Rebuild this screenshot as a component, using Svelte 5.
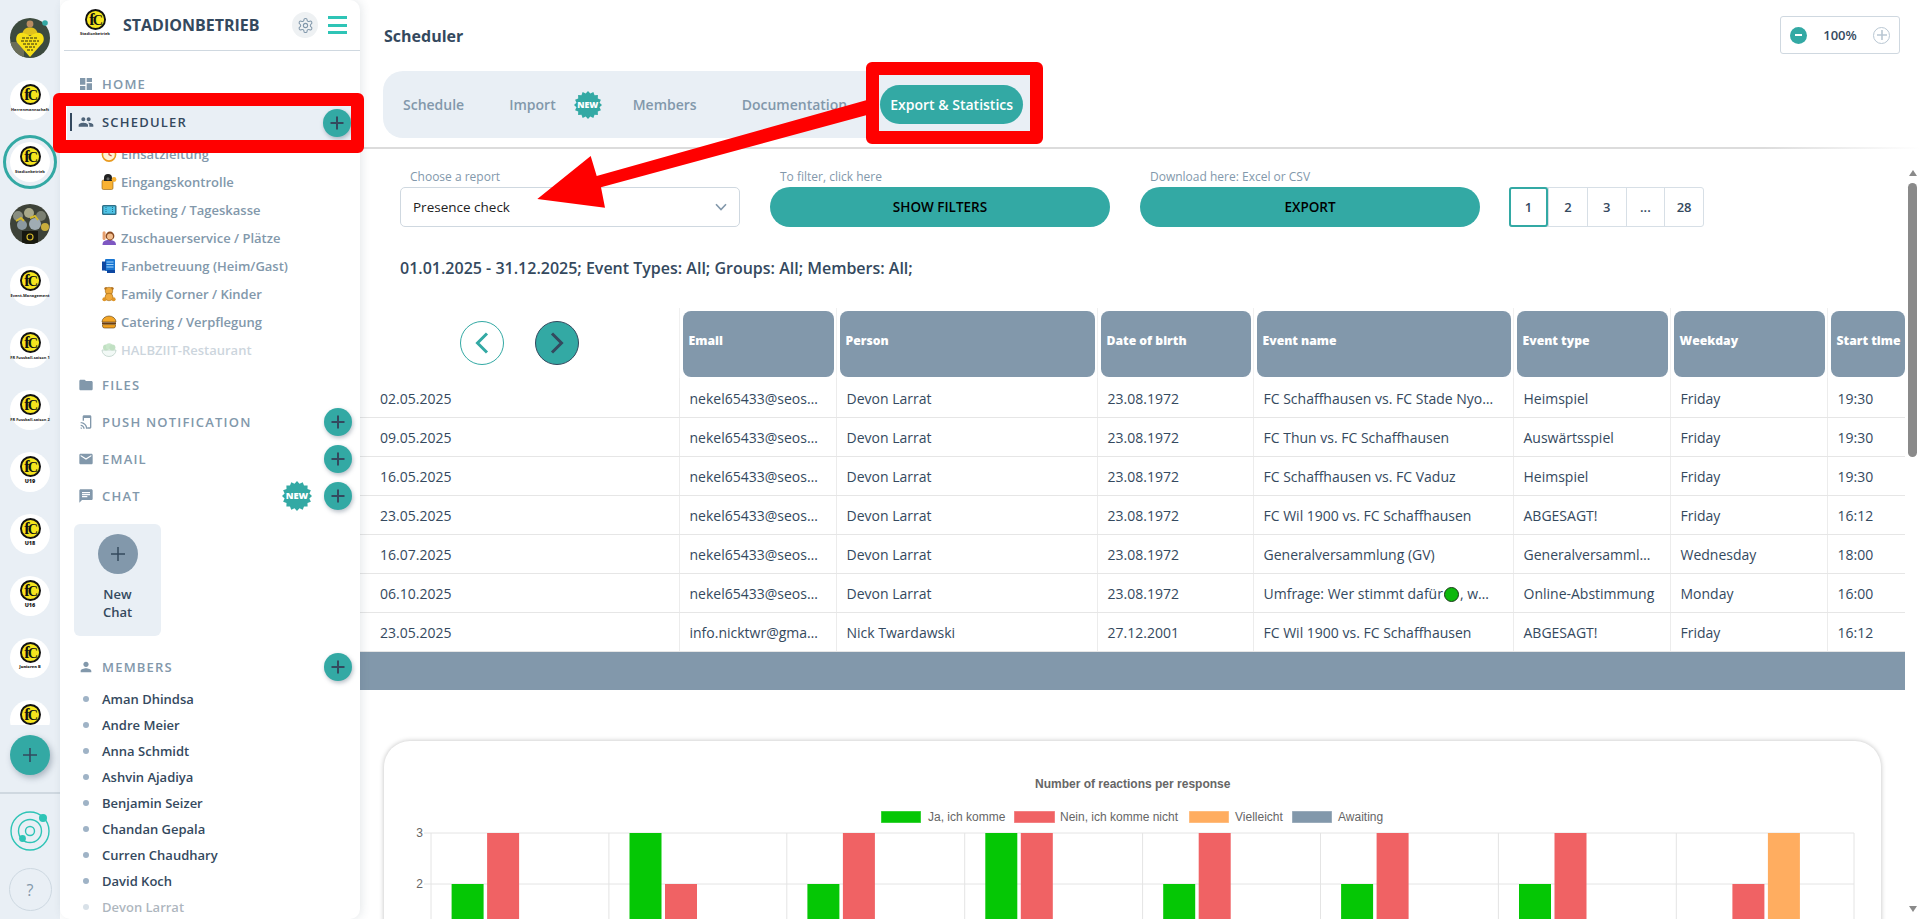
<script>
  const teams = [
    { kind: "photo" },
    { label: "Herrenmannschaft" },
    { label: "Stadionbetrieb", active: true },
    { kind: "group" },
    { label: "Event-Management" },
    { label: "FR Fussball-saison 1" },
    { label: "FR Fussball-saison 2" },
    { label: "U19", big: true },
    { label: "U18", big: true },
    { label: "U16", big: true },
    { label: "Junioren B", big: true, tall: true },
    { label: "" }
  ];

  const scheduleItems = [
    { name: "Einsatzleitung", icon: "clock" },
    { name: "Eingangskontrolle", icon: "gate" },
    { name: "Ticketing / Tageskasse", icon: "ticket" },
    { name: "Zuschauerservice / Plätze", icon: "hand" },
    { name: "Fanbetreuung (Heim/Gast)", icon: "fan" },
    { name: "Family Corner / Kinder", icon: "bear" },
    { name: "Catering / Verpflegung", icon: "burger" },
    { name: "HALBZIIT-Restaurant", icon: "bowl", faded: true }
  ];

  const members = [
    "Aman Dhindsa", "Andre Meier", "Anna Schmidt", "Ashvin Ajadiya", "Benjamin Seizer",
    "Chandan Gepala", "Curren Chaudhary", "David Koch", "Devon Larrat"
  ];

  const icons = {
    home: "M3 13h8V3H3v10zm0 8h8v-6H3v6zm10 0h8V11h-8v10zm0-18v6h8V3h-8z",
    people: "M16 11c1.66 0 2.99-1.34 2.99-3S17.66 5 16 5c-1.66 0-3 1.34-3 3s1.34 3 3 3zm-8 0c1.66 0 2.99-1.34 2.99-3S9.66 5 8 5C6.34 5 5 6.34 5 8s1.34 3 3 3zm0 2c-2.33 0-7 1.17-7 3.5V19h14v-2.5c0-2.33-4.67-3.5-7-3.5zm8 0c-.29 0-.62.02-.97.05 1.16.84 1.97 1.97 1.97 3.45V19h6v-2.5c0-2.33-4.67-3.5-7-3.5z",
    folder: "M10 4H4c-1.1 0-1.99.9-1.99 2L2 18c0 1.1.9 2 2 2h16c1.1 0 2-.9 2-2V8c0-1.1-.9-2-2-2h-8l-2-2z",
    push: "M9 2h9c1.1 0 2 .9 2 2v16c0 1.1-.9 2-2 2h-4v-2h4V6H9v4H7V4c0-1.1.9-2 2-2zM4 12v2c4.4 0 8 3.6 8 8h2c0-5.5-4.5-10-10-10zm0 4v2c2.2 0 4 1.8 4 4h2c0-3.3-2.7-6-6-6zm0 4v2h2c0-1.1-.9-2-2-2z",
    mail: "M20 4H4c-1.1 0-1.99.9-1.99 2L2 18c0 1.1.9 2 2 2h16c1.1 0 2-.9 2-2V6c0-1.1-.9-2-2-2zm0 4l-8 5-8-5V6l8 5 8-5v2z",
    chat: "M20 2H4c-1.1 0-1.99.9-1.99 2L2 22l4-4h14c1.1 0 2-.9 2-2V4c0-1.1-.9-2-2-2zM6 9h12v2H6V9zm8 5H6v-2h8v2zm4-6H6V6h12v2z",
    person: "M12 12c2.21 0 4-1.79 4-4s-1.79-4-4-4-4 1.79-4 4 1.79 4 4 4zm0 2c-2.67 0-8 1.34-8 4v2h16v-2c0-2.66-5.33-4-8-4z"
  };

  const rows = [
    ["02.05.2025", "nekel65433@seos…", "Devon Larrat", "23.08.1972", "FC Schaffhausen vs. FC Stade Nyo…", "Heimspiel", "Friday", "19:30"],
    ["09.05.2025", "nekel65433@seos…", "Devon Larrat", "23.08.1972", "FC Thun vs. FC Schaffhausen", "Auswärtsspiel", "Friday", "19:30"],
    ["16.05.2025", "nekel65433@seos…", "Devon Larrat", "23.08.1972", "FC Schaffhausen vs. FC Vaduz", "Heimspiel", "Friday", "19:30"],
    ["23.05.2025", "nekel65433@seos…", "Devon Larrat", "23.08.1972", "FC Wil 1900 vs. FC Schaffhausen", "ABGESAGT!", "Friday", "16:12"],
    ["16.07.2025", "nekel65433@seos…", "Devon Larrat", "23.08.1972", "Generalversammlung (GV)", "Generalversamml…", "Wednesday", "18:00"],
    ["06.10.2025", "nekel65433@seos…", "Devon Larrat", "23.08.1972", "POLL", "Online-Abstimmung", "Monday", "16:00"],
    ["23.05.2025", "info.nicktwr@gma…", "Nick Twardawski", "27.12.2001", "FC Wil 1900 vs. FC Schaffhausen", "ABGESAGT!", "Friday", "16:12"]
  ];

  const headers = ["Email", "Person", "Date of birth", "Event name", "Event type", "Weekday", "Start time"];

  // chart numbers, coordinates are relative to the card
  const legend = [
    { x: 497, tx: 544, w: 40, color: "#05c705", text: "Ja, ich komme" },
    { x: 630, tx: 676, w: 41, color: "#f06264", text: "Nein, ich komme nicht" },
    { x: 805, tx: 851, w: 40, color: "#ffad60", text: "Vielleicht" },
    { x: 908, tx: 954, w: 40, color: "#8298ab", text: "Awaiting" }
  ];
  const groups = [[2, 3, 0], [3, 2, 0], [2, 3, 0], [3, 3, 0], [2, 3, 0], [2, 3, 0], [2, 3, 0], [0, 2, 3]];
  const barColors = ["#05c705", "#f06264", "#ffad60"];
  const plotLeft = 47;
  const groupW = 177.9;
  const yOf = (v) => 92 + (3 - v) * 51;

  function starPoints(cx, cy, outer, inner, n) {
    const pts = [];
    for (let i = 0; i < n * 2; i++) {
      const r = i % 2 ? inner : outer;
      const a = (Math.PI * i) / n;
      pts.push(`${(cx + r * Math.sin(a)).toFixed(2)},${(cy - r * Math.cos(a)).toFixed(2)}`);
    }
    return pts.join(" ");
  }
  const star = starPoints(15, 15, 15, 12.6, 16);
</script>

{#snippet emblem(size)}
  <svg class="emblem" width={size} height={size} viewBox="0 0 22 22" aria-hidden="true">
    <circle cx="11" cy="11" r="10" fill="#f6e51e" stroke="#111" stroke-width="2" />
    <text x="4.5" y="16.5" class="emblem-f">f</text>
    <text x="8" y="17" class="emblem-c">C</text>
  </svg>
{/snippet}

{#snippet plusBtn(cls = "")}
  <span class="plus {cls}">
    <svg width="16" height="16" viewBox="0 0 16 16" aria-hidden="true"><path d="M8 1.5v13M1.5 8h13" stroke="#34495e" stroke-width="2" fill="none" /></svg>
  </span>
{/snippet}

{#snippet newBadge(size)}
  <span class="badge" style="width:{size}px;height:{size}px">
    <svg width={size} height={size} viewBox="0 0 30 30" aria-hidden="true"><polygon points={star} fill="#33a9a4" /></svg>
    <b style="font-size:{size * 0.31}px">NEW</b>
  </span>
{/snippet}

{#snippet navIcon(d, color = "#8298ab")}
  <svg class="nav-ico" width="16" height="16" viewBox="0 0 24 24" fill={color} aria-hidden="true"><path {d} /></svg>
{/snippet}

{#snippet emoji(name)}
  <svg class="emoji" width="16" height="16" viewBox="0 0 16 16" aria-hidden="true">
    {#if name === "clock"}
      <circle cx="8" cy="8.5" r="6.6" fill="#fff3d6" stroke="#e99a1f" stroke-width="1.6" /><path d="M8 4.6v4l2.6 1.4" stroke="#d2503a" stroke-width="1.2" fill="none" />
    {:else if name === "gate"}
      <rect x="1" y="6" width="11" height="9.5" rx="1.5" fill="#f9b233" stroke="#8a5a10" stroke-width=".6" /><path d="M3 7V4a4 4 0 0 1 8 0v3z" fill="#222" /><circle cx="13" cy="5.5" r="2.4" fill="#f9b233" /><circle cx="7" cy="4.8" r="1.5" fill="#666" />
    {:else if name === "ticket"}
      <rect x="1" y="3" width="14.5" height="10" rx="1.5" fill="#2d6f87" /><rect x="2.4" y="4.4" width="11.7" height="7.2" fill="#4fc3e6" /><path d="M5 5v6M11.5 5v6" stroke="#1f5a70" stroke-width=".8" stroke-dasharray="1 1" />
    {:else if name === "hand"}
      <path d="M1.5 15c0-3.6 2-5 6.5-5s7 1.4 7 5z" fill="#7e57c2" /><rect x="1.6" y="1.2" width="3" height="8.8" rx="1.5" fill="#e7a06e" /><circle cx="9" cy="6" r="4.4" fill="#8a4b22" /><circle cx="9" cy="6.6" r="3" fill="#f2bd8d" />
    {:else if name === "fan"}
      <rect x="4" y="1" width="10" height="12" rx="1" fill="#1976d2" /><path d="M5.5 4h7M5.5 6.5h7M5.5 9h7" stroke="#9fd2fb" stroke-width="1.2" /><rect x="1" y="3.5" width="4" height="9" fill="#0d47a1" /><rect x="6" y="12" width="8" height="3" fill="#0d47a1" />
    {:else if name === "bear"}
      <circle cx="5" cy="2.6" r="1.7" fill="#b8741f" /><circle cx="11" cy="2.6" r="1.7" fill="#b8741f" /><circle cx="8" cy="5" r="3.8" fill="#f0a93b" stroke="#8a5a10" stroke-width=".5" /><ellipse cx="8" cy="11" rx="4" ry="3.8" fill="#f0a93b" stroke="#8a5a10" stroke-width=".5" /><circle cx="3.4" cy="13.2" r="2" fill="#e09526" /><circle cx="12.6" cy="13.2" r="2" fill="#e09526" />
    {:else if name === "burger"}
      <path d="M1 8a7 6 0 0 1 14 0z" fill="#f3a627" stroke="#5c3b0a" stroke-width=".6" /><rect x="1" y="8.4" width="14" height="1.8" fill="#6b3d10" /><path d="M1.5 10.6h13v1.4a2 2 0 0 1-2 2h-9a2 2 0 0 1-2-2z" fill="#f0a020" stroke="#5c3b0a" stroke-width=".6" />
    {:else}
      <path d="M1 8h14a7 6.5 0 0 1-14 0z" fill="#dff1ea" stroke="#5f8f7a" stroke-width=".8" /><circle cx="5" cy="5.6" r="3" fill="#67b36a" /><circle cx="8.2" cy="4.4" r="3.2" fill="#7bc47f" /><circle cx="11.4" cy="5.6" r="3" fill="#67b36a" />
    {/if}
  </svg>
{/snippet}

<div class="page">
  <aside class="rail">
    <div class="team-list">
      {#each teams as t}
        <div class="team" class:active={t.active}>
          {#if t.kind === "photo"}
            <svg width="40" height="40" viewBox="0 0 40 40" aria-hidden="true">
              <defs><clipPath id="c1"><circle cx="20" cy="20" r="20" /></clipPath></defs>
              <g clip-path="url(#c1)">
                <rect width="40" height="40" fill="#3c4a3e" />
                <rect y="24" width="14" height="16" fill="#6a6d58" />
                <circle cx="20" cy="6" r="3.4" fill="#b98c62" />
                <path d="M12 17c1-6 4-7.5 8-7.5s7 1.5 8 7.5z" fill="#e1c21c" />
                <path d="M20 39 7.5 25C4 20 8 13 13.5 15c3 1 5 2 6.5 3 1.5-1 3.5-2 6.5-3C32 13 36 20 32.5 25z" fill="#f6df16" />
                <path d="M12 20h15M11 23h18M13 26h14M15 29h10M17 32h6" stroke="#2a2a10" stroke-width="1.2" stroke-dasharray="3 1" />
              </g>
              <circle cx="35" cy="5" r="2.8" fill="#33a9a4" />
            </svg>
          {:else if t.kind === "group"}
            <svg width="40" height="40" viewBox="0 0 40 40" aria-hidden="true">
              <defs><clipPath id="c2"><circle cx="20" cy="20" r="20" /></clipPath></defs>
              <g clip-path="url(#c2)">
                <rect width="40" height="40" fill="#3d4238" />
                <circle cx="8" cy="12" r="5" fill="#888d80" /><circle cx="19" cy="9" r="5" fill="#a9a98a" /><circle cx="31" cy="12" r="5" fill="#7b8072" />
                <circle cx="12" cy="21" r="5" fill="#8c99a0" /><circle cx="25" cy="20" r="6" fill="#a0acb3" /><circle cx="35" cy="23" r="4" fill="#c8ad3c" />
                <path d="M6 17l5-3 3 3M20 14l5-2 3 4" stroke="#d6ba2c" stroke-width="2" fill="none" />
                <rect x="12" y="27" width="16" height="13" fill="#17180f" /><circle cx="20" cy="33" r="3" fill="none" stroke="#d6ba2c" stroke-width="1.2" />
              </g>
            </svg>
          {:else}
            <span class="team-logo" class:tall={t.tall}>
              {@render emblem(21)}
              <span class="team-label" class:big={t.big}>{t.label}</span>
            </span>
          {/if}
        </div>
      {/each}
    </div>
    <span class="rail-add">
      <svg width="16" height="16" viewBox="0 0 16 16" aria-hidden="true"><path d="M8 1v14M1 8h14" stroke="#34495e" stroke-width="1.6" fill="none" /></svg>
    </span>
    <div class="rail-line"></div>
    <svg class="orbit" width="40" height="40" viewBox="0 0 40 40" aria-hidden="true">
      <circle cx="20" cy="20" r="19" fill="none" stroke="#2ec4b6" stroke-width="1.4" />
      <circle cx="20" cy="20" r="11.5" fill="none" stroke="#2ec4b6" stroke-width="1.4" />
      <circle cx="20" cy="20" r="4.5" fill="none" stroke="#2ec4b6" stroke-width="1.4" />
      <circle cx="33" cy="7" r="4" fill="#2ec4b6" />
      <circle cx="12.5" cy="27.5" r="3.4" fill="#2ec4b6" />
    </svg>
    <div class="help">?</div>
  </aside>

  <nav class="sidebar">
    <header class="side-head">
      <span class="side-logo">
        {@render emblem(21)}
        <span class="team-label">Stadionbetrieb</span>
      </span>
      <h1>STADIONBETRIEB</h1>
      <span class="gear">
        <svg width="17" height="17" viewBox="0 0 24 24" fill="none" stroke="#8298ab" stroke-width="1.5" aria-hidden="true">
          <path d="M12.22 2h-.44a2 2 0 0 0-2 2v.18a2 2 0 0 1-1 1.73l-.43.25a2 2 0 0 1-2 0l-.15-.08a2 2 0 0 0-2.73.73l-.22.38a2 2 0 0 0 .73 2.73l.15.1a2 2 0 0 1 1 1.72v.51a2 2 0 0 1-1 1.74l-.15.09a2 2 0 0 0-.73 2.73l.22.38a2 2 0 0 0 2.73.73l.15-.08a2 2 0 0 1 2 0l.43.25a2 2 0 0 1 1 1.73V20a2 2 0 0 0 2 2h.44a2 2 0 0 0 2-2v-.18a2 2 0 0 1 1-1.73l.43-.25a2 2 0 0 1 2 0l.15.08a2 2 0 0 0 2.73-.73l.22-.39a2 2 0 0 0-.73-2.73l-.15-.08a2 2 0 0 1-1-1.74v-.5a2 2 0 0 1 1-1.74l.15-.09a2 2 0 0 0 .73-2.73l-.22-.38a2 2 0 0 0-2.73-.73l-.15.08a2 2 0 0 1-2 0l-.43-.25a2 2 0 0 1-1-1.73V4a2 2 0 0 0-2-2z" />
          <circle cx="12" cy="12" r="3" />
        </svg>
      </span>
      <span class="burger"><i></i><i></i><i></i></span>
    </header>

    <div class="nav-row home">{@render navIcon(icons.home)}<span>HOME</span></div>
    <div class="nav-row selected">
      <span class="marker"></span>
      {@render navIcon(icons.people, "#4f6479")}<span>SCHEDULER</span>
      {@render plusBtn("in-selected")}
    </div>
    <div class="sublist">
      {#each scheduleItems as item}
        <div class="subitem" class:faded={item.faded}>
          {@render emoji(item.icon)}<span>{item.name}</span>
        </div>
      {/each}
    </div>
    <div class="nav-row files">{@render navIcon(icons.folder)}<span>FILES</span></div>
    <div class="nav-row">{@render navIcon(icons.push)}<span>PUSH NOTIFICATION</span>{@render plusBtn()}</div>
    <div class="nav-row">{@render navIcon(icons.mail)}<span>EMAIL</span>{@render plusBtn()}</div>
    <div class="nav-row">
      {@render navIcon(icons.chat)}<span>CHAT</span>
      <span class="chat-new">{@render newBadge(30)}</span>
      {@render plusBtn()}
    </div>
    <div class="new-chat">
      <span class="new-chat-btn">
        <svg width="16" height="16" viewBox="0 0 16 16" aria-hidden="true"><path d="M8 1v14M1 8h14" stroke="#34495e" stroke-width="1.5" fill="none" /></svg>
      </span>
      <span class="new-chat-text">New<br />Chat</span>
    </div>
    <div class="nav-row members-head">{@render navIcon(icons.person)}<span>MEMBERS</span>{@render plusBtn()}</div>
    {#each members as m, i}
      <div class="member" class:faded={i === members.length - 1}><i></i>{m}</div>
    {/each}
  </nav>

  <main class="main">
    <div class="top">
      <h2>Scheduler</h2>
      <div class="zoom-box">
        <span class="zoom-minus"></span>
        <span class="zoom-val">100%</span>
        <span class="zoom-plus">
          <svg width="10" height="10" viewBox="0 0 10 10" aria-hidden="true"><path d="M5 0v10M0 5h10" stroke="#b9c7d3" stroke-width="1.6" /></svg>
        </span>
      </div>
    </div>

    <div class="tabs">
      <span class="tab t-schedule">Schedule</span>
      <span class="tab t-import">Import</span>
      <span class="t-badge">{@render newBadge(28)}</span>
      <span class="tab t-members">Members</span>
      <span class="tab t-docs">Documentation</span>
      <span class="tab t-export">Export &amp; Statistics</span>
    </div>
    <div class="hr"></div>

    <div class="scroll-wrap">
      <div class="content">
        <div class="toolbar">
          <div class="field">
            <label for="report">Choose a report</label>
            <div class="select" id="report">
              <span>Presence check</span>
              <svg width="12" height="8" viewBox="0 0 12 8" aria-hidden="true"><path d="M1 1.2 6 6.5l5-5.3" stroke="#8298ab" stroke-width="1.6" fill="none" /></svg>
            </div>
          </div>
          <div class="field">
            <span class="lbl">To filter, click here</span>
            <button class="pill">SHOW FILTERS</button>
          </div>
          <div class="field">
            <span class="lbl">Download here: Excel or CSV</span>
            <button class="pill">EXPORT</button>
          </div>
          <div class="pages">
            <span class="page-cell current">1</span>
            <span class="page-cell">2</span>
            <span class="page-cell">3</span>
            <span class="page-cell">...</span>
            <span class="page-cell">28</span>
          </div>
        </div>

        <p class="filter-text">01.01.2025 - 31.12.2025; Event Types: All; Groups: All; Members: All;</p>

        <table>
          <colgroup>
            <col style="width:319px" /><col style="width:157px" /><col style="width:261px" /><col style="width:156px" />
            <col style="width:260px" /><col style="width:157px" /><col style="width:157px" /><col style="width:78px" />
          </colgroup>
          <thead>
            <tr>
              <th class="nav-cell">
                <div class="arrows">
                  <span class="arrow-btn">
                    <svg width="16" height="24" viewBox="0 0 16 24" aria-hidden="true"><path d="M13 2.5 3.5 12l9.5 9.5" stroke="#33a9a4" stroke-width="3" fill="none" /></svg>
                  </span>
                  <span class="arrow-btn on">
                    <svg width="16" height="24" viewBox="0 0 16 24" aria-hidden="true"><path d="m3 2.5 9.5 9.5L3 21.5" stroke="#34495e" stroke-width="3" fill="none" /></svg>
                  </span>
                </div>
              </th>
              {#each headers as h}
                <th><div class="th-box">{h}</div></th>
              {/each}
            </tr>
          </thead>
          <tbody>
            {#each rows as r}
              <tr>
                {#each r as c, i}
                  <td class:first={i === 0}>
                    {#if c === "POLL"}Umfrage: Wer stimmt dafür<span class="dot"></span>, w…{:else}{c}{/if}
                  </td>
                {/each}
              </tr>
            {/each}
            <tr class="foot"><td colspan="8"></td></tr>
          </tbody>
        </table>

        <section class="chart-card">
          <svg width="1497" height="300" viewBox="0 0 1497 300" aria-label="Number of reactions per response">
            <text x="651" y="47" class="ch-title">Number of reactions per response</text>
            {#each legend as l}
              <rect x={l.x} y="70" width={l.w} height="12" fill={l.color} stroke="#fff" stroke-opacity=".4" />
              <text x={l.tx} y="80" class="ch-text">{l.text}</text>
            {/each}
            {#each [3, 2] as v}
              <line x1="40" x2="1470" y1={yOf(v)} y2={yOf(v)} stroke="#e4e4e4" />
              <text x="39" y={yOf(v) + 4} text-anchor="end" class="ch-text">{v}</text>
            {/each}
            {#each groups as g, i}
              <line x1={plotLeft + i * groupW} x2={plotLeft + i * groupW} y1="92" y2="300" stroke="#e4e4e4" />
              {#each g as v, b}
                {#if v}
                  <rect x={plotLeft + i * groupW + 20.6 + b * 35.5} y={yOf(v)} width="32" height={yOf(0) - yOf(v)} fill={barColors[b]} />
                {/if}
              {/each}
            {/each}
            <line x1="1470" x2="1470" y1="92" y2="300" stroke="#e4e4e4" />
          </svg>
        </section>
      </div>

      <div class="fake-scroll">
        <i class="up"></i>
        <span class="thumb"></span>
        <i class="down"></i>
      </div>
    </div>
  </main>

  <!-- red markup drawn on top of the screenshot -->
  <div class="mark mark-nav"></div>
  <div class="mark mark-tab"></div>
  <svg class="mark-arrow" width="340" height="60" viewBox="0 0 340 60" aria-hidden="true">
    <polygon points="334,-55 334,-40 68,32.3 72,52.7 4.3,44 57.7,1 63.7,21" fill="#f00" />
  </svg>
</div>

<style>
  :global(body) {
    margin: 0;
    background: #fff;
    overflow: hidden;
  }
  .page {
    position: relative;
    display: flex;
    width: 1920px;
    height: 919px;
    overflow: hidden;
    font-family: "Open Sans", "Liberation Sans", sans-serif;
    color: #34495e;
  }

  /* team rail */
  .rail {
    width: 60px;
    flex: none;
    background: #e9eff5;
    display: flex;
    flex-direction: column;
    align-items: center;
  }
  .team-list {
    width: 60px;
    height: 707px;
    padding-top: 18px;
    overflow: hidden;
    display: flex;
    flex-direction: column;
    align-items: center;
    gap: 22px;
    flex: none;
  }
  .team {
    width: 40px;
    height: 40px;
    flex: none;
    border-radius: 50%;
    background: #fff;
    position: relative;
  }
  .team svg {
    display: block;
  }
  .team.active::before {
    content: "";
    position: absolute;
    inset: -7px;
    border: 3px solid #33a9a4;
    border-radius: 50%;
  }
  .team-logo {
    display: flex;
    flex-direction: column;
    align-items: center;
    padding-top: 4px;
  }
  .team-label {
    font-size: 4px;
    font-weight: 700;
    line-height: 5px;
    margin-top: 2px;
    color: #222;
    white-space: nowrap;
    text-align: center;
  }
  .team-label.big {
    font-size: 5.5px;
    font-weight: 800;
  }
  .tall .team-label {
    white-space: normal;
    width: 22px;
    font-size: 4px;
    line-height: 4px;
  }
  .emblem-f {
    font-family: "Liberation Serif", serif;
    font-weight: 700;
    font-size: 17px;
    fill: #111;
  }
  .emblem-c {
    font-family: "Liberation Serif", serif;
    font-weight: 700;
    font-size: 15px;
    fill: #111;
  }
  .rail-add {
    width: 40px;
    height: 40px;
    margin-top: 10px;
    flex: none;
    border-radius: 50%;
    background: #33a9a4;
    display: flex;
    align-items: center;
    justify-content: center;
    box-shadow: 2px 3px 6px rgba(52, 73, 94, 0.35);
  }
  .rail-line {
    width: 60px;
    height: 2px;
    margin-top: 17px;
    background: #cfd8e0;
    flex: none;
  }
  .orbit {
    margin-top: 17px;
    flex: none;
  }
  .help {
    width: 41px;
    height: 41px;
    margin-top: 17px;
    border: 1.5px solid #cdd8e1;
    border-radius: 50%;
    display: flex;
    align-items: center;
    justify-content: center;
    font-size: 16px;
    color: #8298ab;
    flex: none;
  }

  /* sidebar */
  .sidebar {
    width: 300px;
    height: 919px;
    flex: none;
    background: #fff;
    border-radius: 10px;
    box-shadow: 2px 0 10px rgba(52, 73, 94, 0.12);
    overflow: hidden;
    position: relative;
    z-index: 1;
  }
  .side-head {
    height: 50px;
    margin-left: 4px;
    padding-left: 11px;
    border-bottom: 1px solid #cfd8e0;
    display: flex;
    align-items: center;
    position: relative;
  }
  .side-logo {
    width: 40px;
    margin-right: 8px;
    display: flex;
    flex-direction: column;
    align-items: center;
    margin-top: -6px;
  }
  .side-logo .team-label {
    margin-top: 1px;
  }
  .side-head h1 {
    margin: 0;
    font-size: 16px;
    font-weight: 700;
    color: #34495e;
    flex: 1;
  }
  .gear {
    width: 26px;
    height: 26px;
    border-radius: 50%;
    background: #eef1f3;
    display: flex;
    align-items: center;
    justify-content: center;
    margin-right: 10px;
  }
  .burger {
    width: 19px;
    display: flex;
    flex-direction: column;
    gap: 4.5px;
    margin-right: 13px;
  }
  .burger i {
    display: block;
    height: 3px;
    background: #2ec4b6;
  }
  .nav-row {
    height: 37px;
    display: flex;
    align-items: center;
    padding: 0 8px 0 18px;
    font-size: 13px;
    font-weight: 600;
    letter-spacing: 1.2px;
    color: #8298ab;
    position: relative;
  }
  .nav-row.home {
    margin-top: 15px;
    height: 36px;
  }
  .nav-row.selected {
    margin: 4px 8px 0 7px;
    padding: 0 0 3px 11px;
    box-sizing: border-box;
    height: 34px;
    background: #e9eff5;
    color: #34495e;
  }
  .marker {
    position: absolute;
    left: 3px;
    top: 7px;
    width: 2px;
    height: 18px;
    background: #34495e;
  }
  .nav-ico {
    flex: none;
    margin-right: 8px;
  }
  .plus {
    margin-left: auto;
    width: 28px;
    height: 28px;
    flex: none;
    border-radius: 50%;
    background: #33a9a4;
    display: flex;
    align-items: center;
    justify-content: center;
    box-shadow: 1px 2px 4px rgba(52, 73, 94, 0.35);
  }
  .plus.in-selected {
    margin-right: 1px;
    margin-bottom: -3px;
  }
  .sublist {
    display: flex;
    flex-direction: column;
  }
  .subitem {
    height: 28px;
    display: flex;
    align-items: center;
    padding-left: 41px;
    font-size: 13px;
    font-weight: 600;
    color: #8298ab;
  }
  .emoji {
    margin-right: 4px;
    flex: none;
  }
  .faded {
    opacity: 0.4;
  }
  .nav-row.files {
    margin-top: 2px;
  }
  .chat-new {
    margin-left: auto;
    margin-right: 12px;
    display: flex;
  }
  .chat-new + .plus {
    margin-left: 0;
  }
  .badge {
    position: relative;
    display: inline-flex;
    align-items: center;
    justify-content: center;
    flex: none;
  }
  .badge svg {
    position: absolute;
    inset: 0;
  }
  .badge b {
    position: relative;
    color: #fff;
    font-weight: 800;
    letter-spacing: 0;
  }
  .new-chat {
    width: 87px;
    height: 112px;
    margin: 10px 0 0 14px;
    border-radius: 6px;
    background: #e9eff5;
    display: flex;
    flex-direction: column;
    align-items: center;
    padding-top: 10px;
    box-sizing: border-box;
  }
  .new-chat-btn {
    width: 40px;
    height: 40px;
    border-radius: 50%;
    background: #8298ab;
    display: flex;
    align-items: center;
    justify-content: center;
  }
  .new-chat-text {
    margin-top: 11px;
    text-align: center;
    font-size: 13px;
    font-weight: 600;
    line-height: 18px;
    color: #34495e;
  }
  .members-head {
    margin: 12px 0 1px;
  }
  .member {
    height: 26px;
    display: flex;
    align-items: center;
    padding-left: 23px;
    font-size: 13px;
    font-weight: 600;
    color: #34495e;
  }
  .member i {
    width: 6px;
    height: 6px;
    border-radius: 50%;
    background: #9fb3c6;
    margin-right: 13px;
  }

  /* main */
  .main {
    flex: 1;
    min-width: 0;
    display: flex;
    flex-direction: column;
  }
  .top {
    height: 71px;
    flex: none;
    display: flex;
    align-items: center;
    justify-content: space-between;
    padding: 0 20px 0 24px;
    box-sizing: border-box;
  }
  h2 {
    margin: 0;
    font-size: 16px;
    font-weight: 700;
    color: #34495e;
  }
  .zoom-box {
    width: 120px;
    height: 38px;
    box-sizing: border-box;
    border: 1px solid #cfd8e0;
    border-radius: 3px;
    display: flex;
    align-items: center;
    justify-content: space-between;
    padding: 0 9px;
    margin-top: -1px;
  }
  .zoom-minus {
    width: 17px;
    height: 17px;
    border-radius: 50%;
    background: #33a9a4;
    position: relative;
  }
  .zoom-minus::after {
    content: "";
    position: absolute;
    left: 5px;
    right: 5px;
    top: 7.5px;
    height: 2px;
    background: #fff;
  }
  .zoom-val {
    font-size: 13px;
    font-weight: 600;
  }
  .zoom-plus {
    width: 15px;
    height: 15px;
    border: 1.5px solid #b9c7d3;
    border-radius: 50%;
    display: flex;
    align-items: center;
    justify-content: center;
  }
  .tabs {
    height: 67px;
    margin-left: 23px;
    width: 660px;
    flex: none;
    background: #e9eff5;
    border-radius: 20px;
    display: flex;
    align-items: center;
    font-size: 14px;
    font-weight: 600;
    color: #8298ab;
  }
  .t-schedule {
    margin-left: 20px;
  }
  .t-import {
    margin-left: 45px;
  }
  .t-badge {
    display: flex;
    margin-left: 18px;
  }
  .t-members {
    margin-left: 31px;
  }
  .t-docs {
    margin-left: 45px;
    white-space: nowrap;
  }
  .t-export {
    margin-left: 33px;
    height: 39px;
    width: 143px;
    flex: none;
    box-sizing: border-box;
    border-radius: 20px;
    background: #33a9a4;
    color: #fff;
    display: flex;
    align-items: center;
    justify-content: center;
    font-size: 14px;
    white-space: nowrap;
  }
  .hr {
    height: 2px;
    margin-top: 9px;
    flex: none;
    background: linear-gradient(to right, #dcdcdc 90%, #fff);
  }
  .scroll-wrap {
    flex: 1;
    min-height: 0;
    display: flex;
  }
  .content {
    width: 1545px;
    flex: none;
    overflow: hidden;
  }
  .toolbar {
    display: flex;
    align-items: flex-end;
    gap: 30px;
    padding: 20px 0 0 40px;
  }
  .field {
    width: 340px;
    display: flex;
    flex-direction: column;
  }
  .field label,
  .lbl {
    font-size: 12px;
    line-height: 16px;
    color: #8298ab;
    margin: 0 0 2px 10px;
  }
  .select {
    height: 40px;
    box-sizing: border-box;
    border: 1px solid #cfd8e0;
    border-radius: 5px;
    display: flex;
    align-items: center;
    justify-content: space-between;
    padding: 0 12px;
    font-size: 13.5px;
    font-weight: 500;
    color: #222;
  }
  .pill {
    height: 40px;
    border: 0;
    border-radius: 20px;
    background: #33a9a4;
    font: 600 13.5px "Open Sans", sans-serif;
    color: #000;
  }
  .pages {
    display: flex;
    width: 195px;
    height: 40px;
    box-sizing: border-box;
    border: 1px solid #d7dfe6;
    border-radius: 3px;
    margin-left: -1px;
  }
  .page-cell {
    flex: 1;
    display: flex;
    align-items: center;
    justify-content: center;
    font-size: 13px;
    font-weight: 600;
    border-left: 1px solid #d7dfe6;
  }
  .page-cell:first-child {
    border-left: 0;
  }
  .page-cell.current {
    flex: none;
    width: 39px;
    margin: -1px 0 -1px -1px;
    border: 2px solid #33a9a4;
    border-radius: 3px;
    box-sizing: border-box;
  }
  .filter-text {
    margin: 31px 0 0 40px;
    font-size: 16px;
    line-height: 20px;
    font-weight: 600;
    color: #34495e;
  }
  table {
    margin-top: 30px;
    table-layout: fixed;
    width: 1545px;
    border-collapse: collapse;
    font-size: 14px;
    color: #34495e;
  }
  th {
    padding: 3px 2px 1px 3px;
    border-left: 1px solid #f0f0f0;
    text-align: left;
  }
  th:last-child {
    padding-right: 0;
  }
  th.nav-cell {
    border-left: 0;
    padding: 0;
  }
  .arrows {
    display: flex;
    justify-content: center;
    gap: 31px;
  }
  .arrow-btn {
    width: 44px;
    height: 44px;
    box-sizing: border-box;
    border: 1px solid #33a9a4;
    border-radius: 50%;
    display: flex;
    align-items: center;
    justify-content: center;
  }
  .arrow-btn.on {
    background: #33a9a4;
    border-color: #34495e;
  }
  .th-box {
    height: 66px;
    box-sizing: border-box;
    padding: 20px 0 0 6px;
    border-radius: 8px;
    background: #8298ab;
    color: #fff;
    font-size: 12.2px;
    font-weight: 800;
    line-height: 20px;
    white-space: nowrap;
    overflow: hidden;
  }
  td {
    height: 39px;
    padding: 2px 0 0 10px;
    box-sizing: border-box;
    border-left: 1px solid #ececec;
    border-bottom: 1px solid #e6e6e6;
    font-weight: 500;
    white-space: nowrap;
    overflow: hidden;
  }
  td.first {
    padding-left: 20px;
    border-left: 0;
  }
  .dot {
    display: inline-block;
    width: 15px;
    height: 15px;
    box-sizing: border-box;
    margin: 0 1px;
    vertical-align: -3px;
    border-radius: 50%;
    background: #0db80d;
    border: 1px solid #1a3a1a;
  }
  .foot td {
    padding: 0;
    background: #8298ab;
    border: 0;
  }
  .chart-card {
    margin: 51px 0 0 24px;
    width: 1497px;
    height: 300px;
    box-sizing: border-box;
    background: #fff;
    border-radius: 26px;
    box-shadow: 0 0 5px rgba(0, 0, 0, 0.25);
    overflow: hidden;
  }
  .chart-card svg {
    display: block;
  }
  .ch-title {
    font: 700 12px "Liberation Sans", sans-serif;
    fill: #666;
  }
  .ch-text {
    font: 12px "Liberation Sans", sans-serif;
    fill: #666;
  }
  .fake-scroll {
    width: 15px;
    flex: none;
    display: flex;
    flex-direction: column;
    align-items: center;
    padding: 21px 0 7px;
    box-sizing: border-box;
  }
  .fake-scroll i {
    width: 0;
    height: 0;
    border-left: 4px solid transparent;
    border-right: 4px solid transparent;
  }
  .fake-scroll .up {
    border-bottom: 6px solid #8a8a8a;
  }
  .fake-scroll .down {
    margin-top: auto;
    border-top: 6px solid #8a8a8a;
  }
  .thumb {
    width: 9px;
    height: 274px;
    margin-top: 7px;
    border-radius: 5px;
    background: #8a8a8a;
  }

  /* annotations */
  .mark {
    position: absolute;
    box-sizing: border-box;
    border: 13px solid #f00;
    border-radius: 6px;
    z-index: 3;
  }
  .mark-nav {
    left: 53px;
    top: 93px;
    width: 311px;
    height: 60px;
  }
  .mark-tab {
    left: 866px;
    top: 62px;
    width: 177px;
    height: 82px;
  }
  .mark-arrow {
    position: absolute;
    left: 533px;
    top: 155px;
    overflow: visible;
    z-index: 3;
  }
</style>
